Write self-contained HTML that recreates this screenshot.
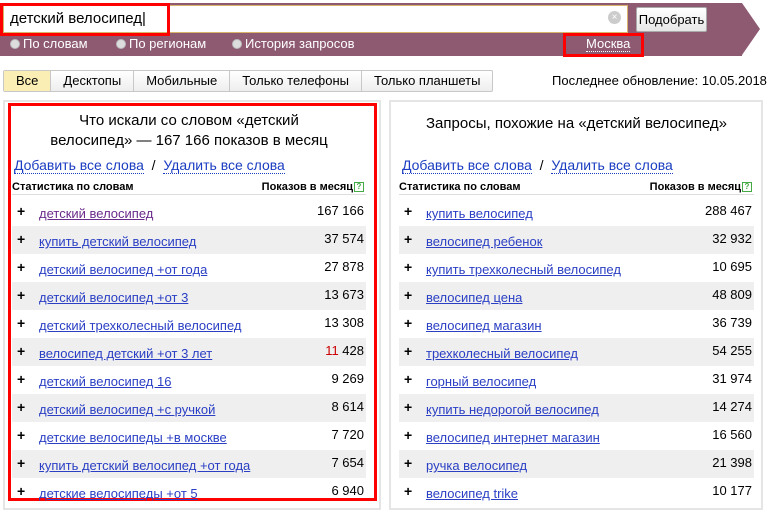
<!DOCTYPE html><html><head><meta charset="utf-8"><style>
*{margin:0;padding:0;box-sizing:border-box}
body{width:778px;height:502px;overflow:hidden;background:#fff;font-family:"Liberation Sans",sans-serif;position:relative;color:#000}
.a{position:absolute}
.band{left:0;top:3px;width:742px;height:53px;background:#8e5a72}
.arrow{left:742px;top:3px;width:0;height:0;border-top:26.5px solid transparent;border-bottom:26.5px solid transparent;border-left:18px solid #8e5a72}
.inp{left:3px;top:5px;width:625px;height:28px;background:#fff;border:1px solid #d9b36a}
.btn{left:636px;top:7px;width:71px;height:25px;background:linear-gradient(#fff,#e6e6e6);border:1px solid #aaa;border-radius:2px;font-size:13px;text-align:center;line-height:23px;white-space:nowrap;overflow:hidden}
.rad{top:37px;font-size:13px;color:#fff;line-height:14px}
.rad i{display:inline-block;width:10px;height:10px;border-radius:50%;background:#ddd;border:1px solid #bbb;vertical-align:-1px;margin-right:3px}
.red{border:3px solid #f00}
.tabs{left:3px;top:70px;height:22px;border:1px solid #c8c8c8;border-radius:2px;display:flex;font-size:13px;background:linear-gradient(#fff,#eee)}
.tabs div{padding:0 12px;line-height:20px;border-left:1px solid #c8c8c8}
.tabs div:first-child{border-left:0;background:#fbeeb4}
.panel{border:2px solid #e5e5e5}
.title{font-size:15px;text-align:center;line-height:20px}
.lk{font-size:14px;color:#1a3dc1;border-bottom:1px dotted #1a3dc1;line-height:15px}
.hd{font-size:11px;font-weight:bold;height:12px;border-bottom:1px solid #ddd;padding-bottom:13px}
.q{display:inline-block;width:10px;height:10px;border:1px solid #4a4;font-size:8px;color:#4a4;text-align:center;line-height:8px;vertical-align:1px;margin-left:1px}
.row{position:absolute;height:28px;font-size:13px}
.row.g{background:#efefef}
.row b{position:absolute;left:5px;top:5px;font-size:14px}
.row a{position:absolute;left:27px;top:8px;color:#2a3fc4;text-decoration:underline}
.row span{position:absolute;right:2px;top:5px}
</style></head><body>
<div class="a band"></div><div class="a arrow"></div>
<div class="a inp"><span style="position:absolute;left:6px;top:4px;font-size:15px">детский велосипед|</span><span style="position:absolute;right:6px;top:5px;width:13px;height:13px;border-radius:50%;background:#ccc;color:#fff;font-size:10px;line-height:13px;text-align:center">×</span></div>
<div class="a red" style="left:0;top:3px;width:170px;height:33px"></div>
<div class="a btn">Подобрать</div>
<div class="a rad" style="left:10px"><i></i>По словам</div>
<div class="a rad" style="left:116px"><i></i>По регионам</div>
<div class="a rad" style="left:232px"><i></i>История запросов</div>
<div class="a red" style="left:563px;top:33px;width:81px;height:24px"></div>
<div class="a" style="left:586px;top:37px;font-size:13px;color:#fff;border-bottom:1px dotted #fff;line-height:14px">Москва</div>
<div class="a tabs"><div>Все</div><div>Десктопы</div><div>Мобильные</div><div>Только телефоны</div><div>Только планшеты</div></div>
<div class="a" style="left:552px;top:73px;font-size:13px">Последнее обновление: 10.05.2018</div>

<div class="a panel" style="left:3px;top:100px;width:378px;height:410px"></div>
<div class="a red" style="left:8px;top:103px;width:369px;height:398px"></div>
<div class="a title" style="left:12px;top:111px;width:354px">Что искали со словом «детский<br>велосипед» — 167 166 показов в месяц</div>
<div class="a" style="left:14px;top:157px;font-size:14px"><span class="lk">Добавить все слова</span> &nbsp;/&nbsp; <span class="lk">Удалить все слова</span></div>
<div class="a hd" style="left:12px;top:181px;width:354px">Статистика по словам<span style="position:absolute;right:2px">Показов в месяц<span class="q">?</span></span></div>

<div class="a panel" style="left:389px;top:100px;width:374px;height:410px"></div>
<div class="a title" style="left:399px;top:114px;width:355px">Запросы, похожие на «детский велосипед»</div>
<div class="a" style="left:402px;top:157px;font-size:14px"><span class="lk">Добавить все слова</span> &nbsp;/&nbsp; <span class="lk">Удалить все слова</span></div>
<div class="a hd" style="left:399px;top:181px;width:355px">Статистика по словам<span style="position:absolute;right:2px">Показов в месяц<span class="q">?</span></span></div>

<div class="row" style="left:12px;top:198px;width:354px"><b>+</b><a style="color:#6a2a8a">детский велосипед</a><span>167 166</span></div>
<div class="row g" style="left:12px;top:226px;width:354px"><b>+</b><a>купить детский велосипед</a><span>37 574</span></div>
<div class="row" style="left:12px;top:254px;width:354px"><b>+</b><a>детский велосипед +от года</a><span>27 878</span></div>
<div class="row g" style="left:12px;top:282px;width:354px"><b>+</b><a>детский велосипед +от 3</a><span>13 673</span></div>
<div class="row" style="left:12px;top:310px;width:354px"><b>+</b><a>детский трехколесный велосипед</a><span>13 308</span></div>
<div class="row g" style="left:12px;top:338px;width:354px"><b>+</b><a>велосипед детский +от 3 лет</a><span><font color="#c00">11</font> 428</span></div>
<div class="row" style="left:12px;top:366px;width:354px"><b>+</b><a>детский велосипед 16</a><span>9 269</span></div>
<div class="row g" style="left:12px;top:394px;width:354px"><b>+</b><a>детский велосипед +с ручкой</a><span>8 614</span></div>
<div class="row" style="left:12px;top:422px;width:354px"><b>+</b><a>детские велосипеды +в москве</a><span>7 720</span></div>
<div class="row g" style="left:12px;top:450px;width:354px"><b>+</b><a>купить детский велосипед +от года</a><span>7 654</span></div>
<div class="row" style="left:12px;top:478px;width:354px"><b>+</b><a>детские велосипеды +от 5</a><span>6 940</span></div>

<div class="row" style="left:399px;top:198px;width:355px"><b>+</b><a>купить велосипед</a><span>288 467</span></div>
<div class="row g" style="left:399px;top:226px;width:355px"><b>+</b><a>велосипед ребенок</a><span>32 932</span></div>
<div class="row" style="left:399px;top:254px;width:355px"><b>+</b><a>купить трехколесный велосипед</a><span>10 695</span></div>
<div class="row g" style="left:399px;top:282px;width:355px"><b>+</b><a>велосипед цена</a><span>48 809</span></div>
<div class="row" style="left:399px;top:310px;width:355px"><b>+</b><a>велосипед магазин</a><span>36 739</span></div>
<div class="row g" style="left:399px;top:338px;width:355px"><b>+</b><a>трехколесный велосипед</a><span>54 255</span></div>
<div class="row" style="left:399px;top:366px;width:355px"><b>+</b><a>горный велосипед</a><span>31 974</span></div>
<div class="row g" style="left:399px;top:394px;width:355px"><b>+</b><a>купить недорогой велосипед</a><span>14 274</span></div>
<div class="row" style="left:399px;top:422px;width:355px"><b>+</b><a>велосипед интернет магазин</a><span>16 560</span></div>
<div class="row g" style="left:399px;top:450px;width:355px"><b>+</b><a>ручка велосипед</a><span>21 398</span></div>
<div class="row" style="left:399px;top:478px;width:355px"><b>+</b><a>велосипед trike</a><span>10 177</span></div>
</body></html>
